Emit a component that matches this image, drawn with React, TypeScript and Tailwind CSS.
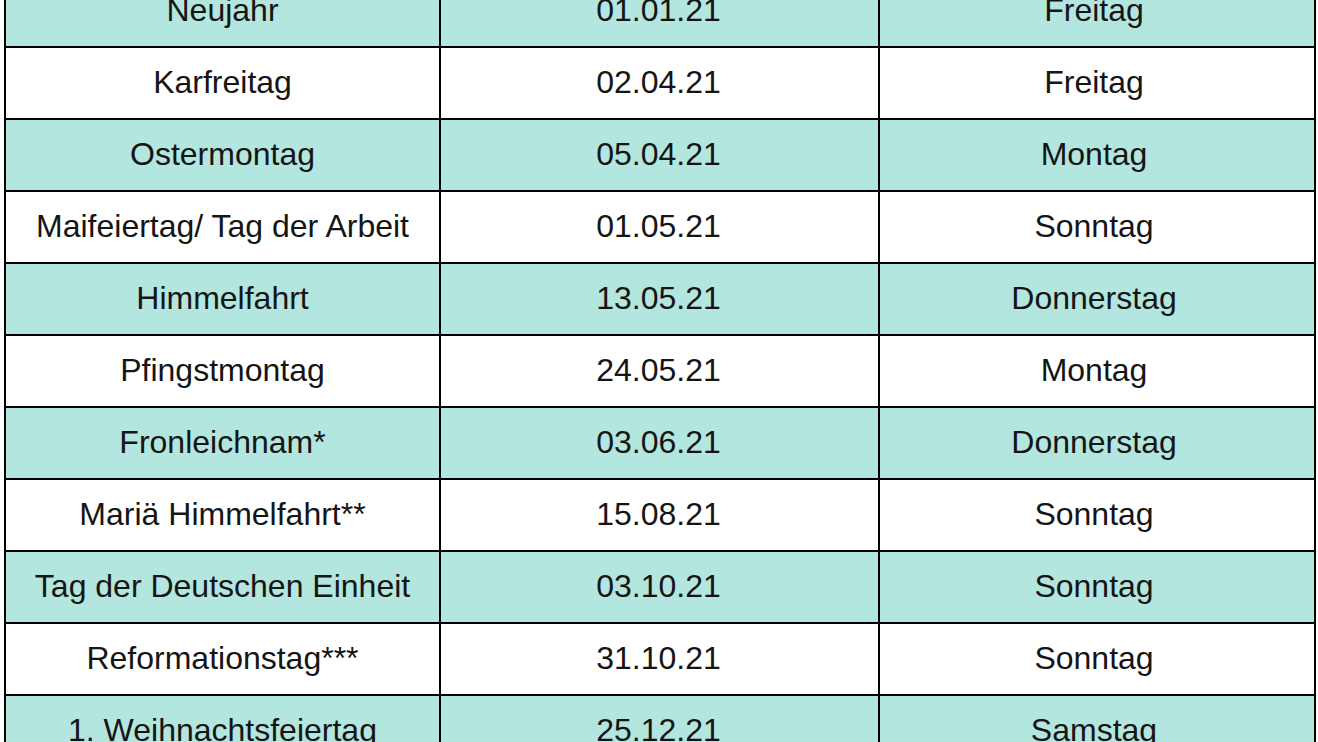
const rows: [string, string, string][] = [
  ["Neujahr", "01.01.21", "Freitag"],
  ["Karfreitag", "02.04.21", "Freitag"],
  ["Ostermontag", "05.04.21", "Montag"],
  ["Maifeiertag/ Tag der Arbeit", "01.05.21", "Sonntag"],
  ["Himmelfahrt", "13.05.21", "Donnerstag"],
  ["Pfingstmontag", "24.05.21", "Montag"],
  ["Fronleichnam*", "03.06.21", "Donnerstag"],
  ["Mariä Himmelfahrt**", "15.08.21", "Sonntag"],
  ["Tag der Deutschen Einheit", "03.10.21", "Sonntag"],
  ["Reformationstag***", "31.10.21", "Sonntag"],
  ["1. Weihnachtsfeiertag", "25.12.21", "Samstag"],
];

export default function App() {
  return (
    <div className="h-[742px] w-[1318px] overflow-hidden bg-white">
      {/* Holiday table, top row is cut off */}
      <div
        className="-mt-[24px] ml-[4px] w-[1312px] border-x-2 border-black text-[32px] text-[#151515]"
        style={{ fontFamily: '"Liberation Sans", Arial, sans-serif' }}
      >
        {rows.map((r, i) => (
          <div
            key={r[0]}
            className={`grid h-[72px] grid-cols-[435px_439px_1fr] border-b-2 border-black ${
              i % 2 === 0 ? "bg-[#b2e6de]" : "bg-white"
            }`}
          >
            <div className="flex items-center justify-center border-r-2 border-black pb-[2px]">{r[0]}</div>
            <div className="flex items-center justify-center border-r-2 border-black pb-[2px] pr-[2px]">{r[1]}</div>
            <div className="flex items-center justify-center pb-[2px] pr-[6px]">{r[2]}</div>
          </div>
        ))}
      </div>
    </div>
  );
}
